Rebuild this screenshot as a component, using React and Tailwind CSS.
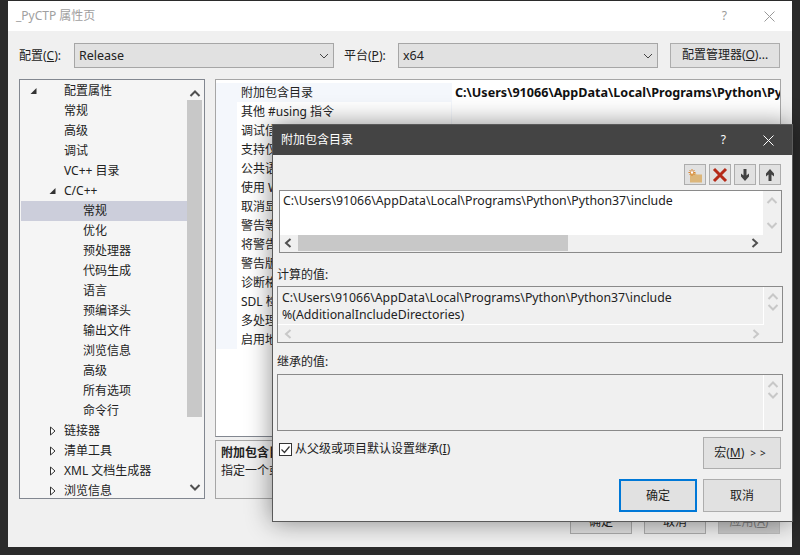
const treeRows = [
  { label: '配置属性', indent: 'pl-[43px]', arrow: 'open', arrowPad: 'left-[8px]' },
  { label: '常规', indent: 'pl-[43px]' },
  { label: '高级', indent: 'pl-[43px]' },
  { label: '调试', indent: 'pl-[43px]' },
  { label: 'VC++ 目录', indent: 'pl-[43px]' },
  { label: 'C/C++', indent: 'pl-[43px]', arrow: 'open', arrowPad: 'left-[27px]' },
  { label: '常规', indent: 'pl-[62px]', selected: true },
  { label: '优化', indent: 'pl-[62px]' },
  { label: '预处理器', indent: 'pl-[62px]' },
  { label: '代码生成', indent: 'pl-[62px]' },
  { label: '语言', indent: 'pl-[62px]' },
  { label: '预编译头', indent: 'pl-[62px]' },
  { label: '输出文件', indent: 'pl-[62px]' },
  { label: '浏览信息', indent: 'pl-[62px]' },
  { label: '高级', indent: 'pl-[62px]' },
  { label: '所有选项', indent: 'pl-[62px]' },
  { label: '命令行', indent: 'pl-[62px]' },
  { label: '链接器', indent: 'pl-[43px]', arrow: 'closed', arrowPad: 'left-[27px]' },
  { label: '清单工具', indent: 'pl-[43px]', arrow: 'closed', arrowPad: 'left-[27px]' },
  { label: 'XML 文档生成器', indent: 'pl-[43px]', arrow: 'closed', arrowPad: 'left-[27px]' },
  { label: '浏览信息', indent: 'pl-[43px]', arrow: 'closed', arrowPad: 'left-[27px]' },
];

const gridRows = ['附加包含目录', '其他 #using 指令', '调试信息格式', '支持仅我的代码调试', '公共语言运行时支持', '使用 Windows 运行时扩展', '取消显示启动版权标志', '警告等级', '将警告视为错误', '警告版本', '诊断格式', 'SDL 检查', '多处理器编译', '启用地址级别'];

const Chevron = ({ dir, color = '#505050' }) => {
  const paths = {
    up: 'M1.5 7 L6 2.5 L10.5 7',
    down: 'M1.5 3 L6 7.5 L10.5 3',
    left: 'M7.5 1 L3 5 L7.5 9',
    right: 'M3.5 1 L8 5 L3.5 9',
  };
  return (
    <svg width="12" height="10" viewBox="0 0 12 10" fill="none">
      <path d={paths[dir]} stroke={color} strokeWidth="2" />
    </svg>
  );
};

const Arrow = ({ open }) => (
  <svg width="9" height="10" viewBox="0 0 9 10">
    {open
      ? <path d="M7.5 2 V8 H1.5 Z" fill="#333" />
      : <path d="M2.5 1 L7 5 L2.5 9 Z" fill="#fff" stroke="#333" />}
  </svg>
);

const ComboArrow = () => (
  <svg width="10" height="6" viewBox="0 0 10 6" fill="none">
    <path d="M1 1 L5 5 L9 1" stroke="#444" />
  </svg>
);

const Button = ({ children, className = 'border border-[#adadad]' }) => (
  <div className={`flex items-center justify-center bg-[#e1e1e1] text-[#222] ${className}`}>
    {children}
  </div>
);

const IconButton = ({ children }) => (
  <div className="flex h-[21px] w-[22px] items-center justify-center border border-[#adadad] bg-[#e1e1e1]">
    {children}
  </div>
);

const ReadOnlyScroll = () => (
  <div className="flex w-[18px] flex-col items-center justify-between py-[5px]">
    <Chevron dir="up" color="#c8c8c8" />
    <Chevron dir="down" color="#c8c8c8" />
  </div>
);

const App = () => (
  <div className="relative h-[555px] w-[800px] overflow-hidden bg-[#2b2b2b] pb-[8px] pl-[8px] pr-[8px] pt-px text-[12px] text-[#222]" style={{ fontFamily: '"Noto Sans", "Noto Sans CJK SC", sans-serif' }}>
    {/* parent window */}
    <div className="flex h-[546px] w-[784px] flex-col bg-[#f0f0f0]">
      <div className="flex h-[30px] shrink-0 items-center justify-between bg-white pl-[8px] pr-[17px]">
        <span className="text-[#a0a0a0]">_PyCTP 属性页</span>
        <div className="flex items-center gap-[37px]">
          <span className="text-[#999]">?</span>
          <svg width="11" height="11" viewBox="0 0 11 11"><path d="M0.5 0.5 L10.5 10.5 M10.5 0.5 L0.5 10.5" stroke="#999" /></svg>
        </div>
      </div>

      <div className="flex items-center pl-[11px] pt-[12px]">
        <span className="w-[55px]">配置(<u>C</u>):</span>
        <div className="flex h-[25px] w-[260px] items-center justify-between border border-[#a6a6a6] bg-[#e1e1e1] pl-[4px] pr-[4px]">
          <span className="pt-[1px] text-[12.5px]">Release</span>
          <ComboArrow />
        </div>
        <span className="ml-[10px] w-[54px]">平台(<u>P</u>):</span>
        <div className="flex h-[25px] w-[260px] items-center justify-between border border-[#a6a6a6] bg-[#e1e1e1] pl-[4px] pr-[4px]">
          <span className="pt-[1px] text-[12.5px]">x64</span>
          <ComboArrow />
        </div>
        <Button className="ml-[12px] mt-[-1px] h-[25px] w-[110px] border border-[#adadad]">配置管理器(<u>O</u>)...</Button>
      </div>

      <div className="flex pl-[11px] pt-[11px]">
        <div className="flex h-[420px] w-[186px] border border-[#828790] bg-[#f5f5f5] p-px">
          <div className="w-[166px] overflow-hidden">
            {treeRows.map((row, index) => (
              <div key={index} className={`relative flex h-[20px] items-center ${row.indent} ${row.selected ? 'bg-[#cccedb]' : ''}`}>
                {row.arrow && <span className={`absolute top-[5px] ${row.arrowPad}`}><Arrow open={row.arrow === 'open'} /></span>}
                <span className="whitespace-nowrap">{row.label}</span>
              </div>
            ))}
          </div>
          <div className="flex w-[15px] flex-col items-center justify-between bg-[#f5f5f5] py-[5px]">
            <div className="flex h-[16px] items-center"><Chevron dir="up" /></div>
            <div className="mb-[65px] mt-[-2px] w-[15px] flex-1 bg-[#c8c8c8]" />
            <div className="flex h-[10px] items-center"><Chevron dir="down" /></div>
          </div>
        </div>

        <div className="ml-[10px] flex w-[566px] flex-col">
          <div className="h-[358px] border border-[#a6a6a6] border-b-[#828790] bg-white pt-[3px]">
            {gridRows.map((row, index) => (
              <div key={index} className="flex h-[19px] items-center">
                <div className="h-full w-[21px] shrink-0 bg-[#f4f7fc]" />
                <div className={`h-full w-[214px] shrink-0 overflow-hidden whitespace-nowrap pl-[4px] leading-[19px] ${index === 0 ? 'bg-[#f4f7fc]' : ''}`}>{row}</div>
                <div className="h-full flex-1 overflow-hidden whitespace-nowrap border-l border-[#f4f7fc] pl-[3px] text-[12.6px] font-bold leading-[19px] text-[#111]">
                  {index === 0 && 'C:\\Users\\91066\\AppData\\Local\\Programs\\Python\\Python37\\include'}
                </div>
              </div>
            ))}
          </div>
          <div className="mt-[3px] h-[59px] border border-[#a6a6a6] pl-[5px] pt-[3px] leading-[18px]">
            <div className="font-bold">附加包含目录</div>
            <div>指定一个或多个要添加到包含路径中的目录</div>
          </div>
        </div>
      </div>

      <div className="flex justify-end gap-[12px] pr-[12px] pt-[11px]">
        <Button className="h-[24px] w-[62px] border border-[#adadad]">确定</Button>
        <Button className="h-[24px] w-[62px] border border-[#adadad]">取消</Button>
        <div className="flex h-[24px] w-[62px] items-center justify-center border border-[#bfbfbf] bg-[#ccc] text-[#838383]">应用(<u>A</u>)</div>
      </div>
    </div>

    {/* child dialog over the parent */}
    <div className="absolute left-[272px] top-[124px] flex h-[398px] w-[521px] flex-col border border-[#5a5a5a] bg-[#f0f0f0] shadow-[0_0_24px_rgba(0,0,0,0.45)]">
      <div className="flex h-[30px] shrink-0 items-center justify-between bg-[#444] pl-[8px] pr-[18px] text-white">
        <span>附加包含目录</span>
        <div className="flex items-center gap-[37px]">
          <span>?</span>
          <svg width="11" height="11" viewBox="0 0 11 11"><path d="M0.5 0.5 L10.5 10.5 M10.5 0.5 L0.5 10.5" stroke="#fff" /></svg>
        </div>
      </div>

      <div className="flex justify-end gap-[3px] pr-[11px] pt-[9px]">
        <IconButton>
          <svg width="18" height="16" viewBox="0 0 18 16">
            <path d="M4 6 H9.5 L10.5 7.5 H16 V15.5 H4 Z" fill="#dcb67a" />
            <path d="M6 2 V9 M2.5 5.5 H9.5 M3.5 3 L8.5 8 M8.5 3 L3.5 8" stroke="#d9822b" strokeWidth="1" />
            <circle cx="6" cy="5.5" r="1.2" fill="#fff" />
          </svg>
        </IconButton>
        <IconButton>
          <svg width="16" height="16" viewBox="0 0 16 16">
            <path d="M2 2 L14 14 M14 2 L2 14" stroke="#b52a18" strokeWidth="3" />
          </svg>
        </IconButton>
        <IconButton>
          <svg width="12" height="14" viewBox="0 0 12 14">
            <path d="M4.5 1 H7.5 V7.5 L10 5.5 V8.5 L6 13 L2 8.5 V5.5 L4.5 7.5 Z" fill="#424242" />
          </svg>
        </IconButton>
        <IconButton>
          <svg width="12" height="14" viewBox="0 0 12 14">
            <path d="M4.5 13 H7.5 V6.5 L10 8.5 V5.5 L6 1 L2 5.5 V8.5 L4.5 6.5 Z" fill="#424242" />
          </svg>
        </IconButton>
      </div>

      <div className="ml-[6px] mt-[5px] flex h-[63px] w-[503px] flex-col border border-[#8a8a8a] bg-[#f0f0f0]">
        <div className="flex h-[44px]">
          <div className="flex-1 bg-white pl-[3px] pt-[1px] text-[12.3px] leading-[18px]">C:\Users\91066\AppData\Local\Programs\Python\Python37\include</div>
          <ReadOnlyScroll />
        </div>
        <div className="flex h-[16px] items-center">
          <div className="flex w-[18px] justify-center"><Chevron dir="left" /></div>
          <div className="h-full w-[270px] bg-[#c8c8c8]" />
          <div className="flex flex-1 justify-end pr-[20px]"><Chevron dir="right" /></div>
        </div>
      </div>

      <div className="ml-[4px] mt-[13px] leading-[18px]">计算的值:</div>
      <div className="ml-[4px] mt-[2px] flex h-[57px] w-[506px] flex-col border border-[#8a8a8a]">
        <div className="flex h-[38px]">
          <div className="flex-1 border-b border-white pl-[4px] pt-[2px] text-[12.3px] leading-[17px]">
            <div>C:\Users\91066\AppData\Local\Programs\Python\Python37\include</div>
            <div>%(AdditionalIncludeDirectories)</div>
          </div>
          <div className="border-l border-white"><ReadOnlyScroll /></div>
        </div>
        <div className="flex flex-1 items-center justify-between pl-[5px] pr-[20px]">
          <Chevron dir="left" color="#c8c8c8" />
          <Chevron dir="right" color="#c8c8c8" />
        </div>
      </div>

      <div className="ml-[4px] mt-[10px] leading-[18px]">继承的值:</div>
      <div className="ml-[4px] mt-[3px] flex h-[57px] w-[506px] justify-end border border-[#8a8a8a]">
        <div className="border-l border-white"><ReadOnlyScroll /></div>
      </div>

      <div className="flex items-start justify-between pr-[11px] pt-[6px]">
        <div className="ml-[6px] mt-[3px] flex items-center gap-[3px]">
          <div className="flex h-[13px] w-[13px] items-center justify-center border border-[#333] bg-white">
            <svg width="11" height="11" viewBox="0 0 11 11" fill="none"><path d="M1.5 5.5 L4.5 8.5 L9.5 2.5" stroke="#333" strokeWidth="1.2" /></svg>
          </div>
          <span>从父级或项目默认设置继承(<u>I</u>)</span>
        </div>
        <Button className="h-[32px] w-[78px] border border-[#adadad]">宏(<u>M</u>) <span className="ml-[6px] text-[10px] tracking-[4px]">&gt;&gt;</span></Button>
      </div>

      <div className="flex justify-end gap-[6px] pr-[11px] pt-[10px]">
        <Button className="h-[33px] w-[78px] border-2 border-[#0078d7]">确定</Button>
        <Button className="h-[33px] w-[78px] border border-[#adadad]">取消</Button>
      </div>
    </div>
  </div>
);

export default App;
